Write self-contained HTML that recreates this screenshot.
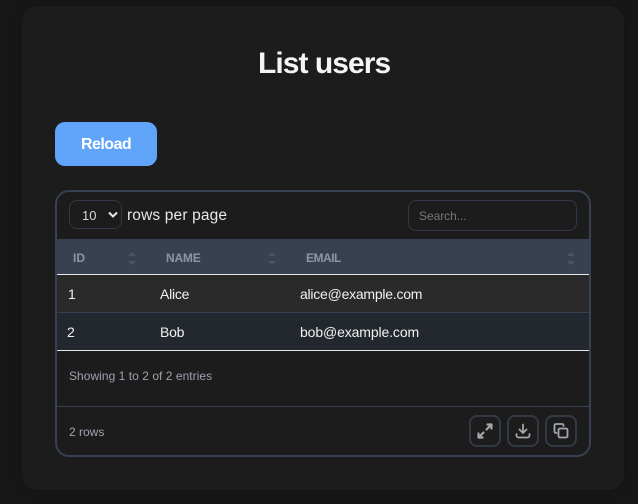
<!DOCTYPE html>
<html>
<head>
<meta charset="utf-8">
<style>
html,body{margin:0;padding:0;width:638px;height:504px;overflow:hidden;background:#171717;font-family:"Liberation Sans",sans-serif;}
.a{position:absolute;white-space:nowrap;line-height:1;}
.box{position:absolute;box-sizing:border-box;}
.ibtn{position:absolute;box-sizing:border-box;top:415px;width:32px;height:32px;border:2px solid #323945;border-radius:8px;}
.ibtn svg{position:absolute;left:5px;top:5px;width:18px;height:18px;fill:none;stroke:#a3a6ab;stroke-width:1.8;stroke-linecap:round;stroke-linejoin:round;}
.th{color:#8f96a2;font-size:12px;font-weight:bold;top:252px;}
.td{color:#f1f1f1;font-size:14px;letter-spacing:-.24px;}
.s{position:absolute;width:0;height:0;border-left:4px solid transparent;border-right:4px solid transparent;}
.u{border-bottom:4px solid #4b5563;top:252px;}
.d{border-top:4px solid #4b5563;top:261px;}
</style>
</head>
<body>
<div class="box" style="left:22px;top:6px;width:602px;height:484px;background:#1c1c1c;border-radius:16px;box-shadow:0 0 14px rgba(0,0,0,.2);"></div>
<div class="a" style="left:258px;top:49px;font-size:30px;font-weight:bold;color:#f3f4f6;letter-spacing:-.95px;">List users</div>
<div class="box" style="left:55px;top:122px;width:102px;height:44px;background:#60a5fa;border-radius:10px;"></div>
<div class="a" style="left:81px;top:137px;font-size:16px;font-weight:bold;color:#fff;letter-spacing:-.55px;">Reload</div>

<div class="box" style="left:55px;top:190px;width:536px;height:267px;border:2px solid #374151;border-radius:14px;"></div>
<div class="box" style="left:69px;top:200px;width:53px;height:29px;border:1px solid #313744;border-radius:8px;"></div>
<div class="a" style="left:82px;top:209px;font-size:13px;color:#d5d7da;">10</div>
<svg style="position:absolute;left:107px;top:211px" width="12" height="8" viewBox="0 0 12 8"><path d="M2 1.500 6 5.500 10 1.500" fill="none" stroke="#e5e7eb" stroke-width="2"/></svg>
<div class="a" style="left:127px;top:208px;font-size:15.5px;color:#e5e7eb;letter-spacing:.15px;">rows per page</div>
<div class="box" style="left:408px;top:200px;width:169px;height:31px;border:1px solid #313744;border-radius:8px;"></div>
<div class="a" style="left:419px;top:210px;font-size:12px;color:#74777c;letter-spacing:-.05px;">Search...</div>

<div class="box" style="left:57px;top:239px;width:532px;height:35px;background:#374151;"></div>
<div class="box" style="left:57px;top:274px;width:532px;height:1px;background:#e5e7eb;"></div>
<div class="box" style="left:57px;top:275px;width:532px;height:38px;background:#2a2a2a;"></div>
<div class="box" style="left:57px;top:312px;width:532px;height:1px;background:#374151;"></div>
<div class="box" style="left:57px;top:313px;width:532px;height:37px;background:#23272e;"></div>
<div class="box" style="left:57px;top:350px;width:532px;height:1px;background:#e5e7eb;"></div>

<div class="a th" style="left:73px;">ID</div>
<div class="a th" style="left:166px;letter-spacing:-.2px;">NAME</div>
<div class="a th" style="left:306px;letter-spacing:-.5px;">EMAIL</div>
<div class="s u" style="left:128px;"></div><div class="s d" style="left:128px;"></div>
<div class="s u" style="left:268px;"></div><div class="s d" style="left:268px;"></div>
<div class="s u" style="left:567px;"></div><div class="s d" style="left:567px;"></div>

<div class="a td" style="left:68px;top:287px;">1</div>
<div class="a td" style="left:160px;top:287px;">Alice</div>
<div class="a td" style="left:300px;top:287px;">alice@example.com</div>
<div class="a td" style="left:67px;top:325px;">2</div>
<div class="a td" style="left:160px;top:325px;">Bob</div>
<div class="a td" style="left:300px;top:325px;letter-spacing:-.12px;">bob@example.com</div>

<div class="a" style="left:69px;top:370px;font-size:12px;color:#9ca3af;letter-spacing:.04px;">Showing 1 to 2 of 2 entries</div>
<div class="box" style="left:57px;top:406px;width:532px;height:1px;background:#374151;"></div>
<div class="a" style="left:69px;top:426px;font-size:12px;color:#9ca3af;">2 rows</div>

<div class="ibtn" style="left:469px;"><svg viewBox="0 0 18 18"><path stroke-width="2.200" d="M10.500 7.500 15.500 2.500M11.500 2.500H15.500V6.500M7.500 10.500 2.500 15.500M2.500 11.500V15.500H6.500"/></svg></div>
<div class="ibtn" style="left:507px;"><svg viewBox="0 0 18 18"><path d="M9 2.500V11M5.500 7.500 9 11 12.500 7.500M2.500 12V13.500A2 2 0 0 0 4.500 15.500H13.500A2 2 0 0 0 15.500 13.500V12"/></svg></div>
<div class="ibtn" style="left:545px;"><svg viewBox="0 0 18 18"><rect x="6.500" y="6.500" width="9" height="9" rx="1.500"/><path d="M11.500 4V3.500A1.500 1.500 0 0 0 10 2H4A1.500 1.500 0 0 0 2.500 3.500V9.500A1.500 1.500 0 0 0 4 11H4.500"/></svg></div>
</body>
</html>
